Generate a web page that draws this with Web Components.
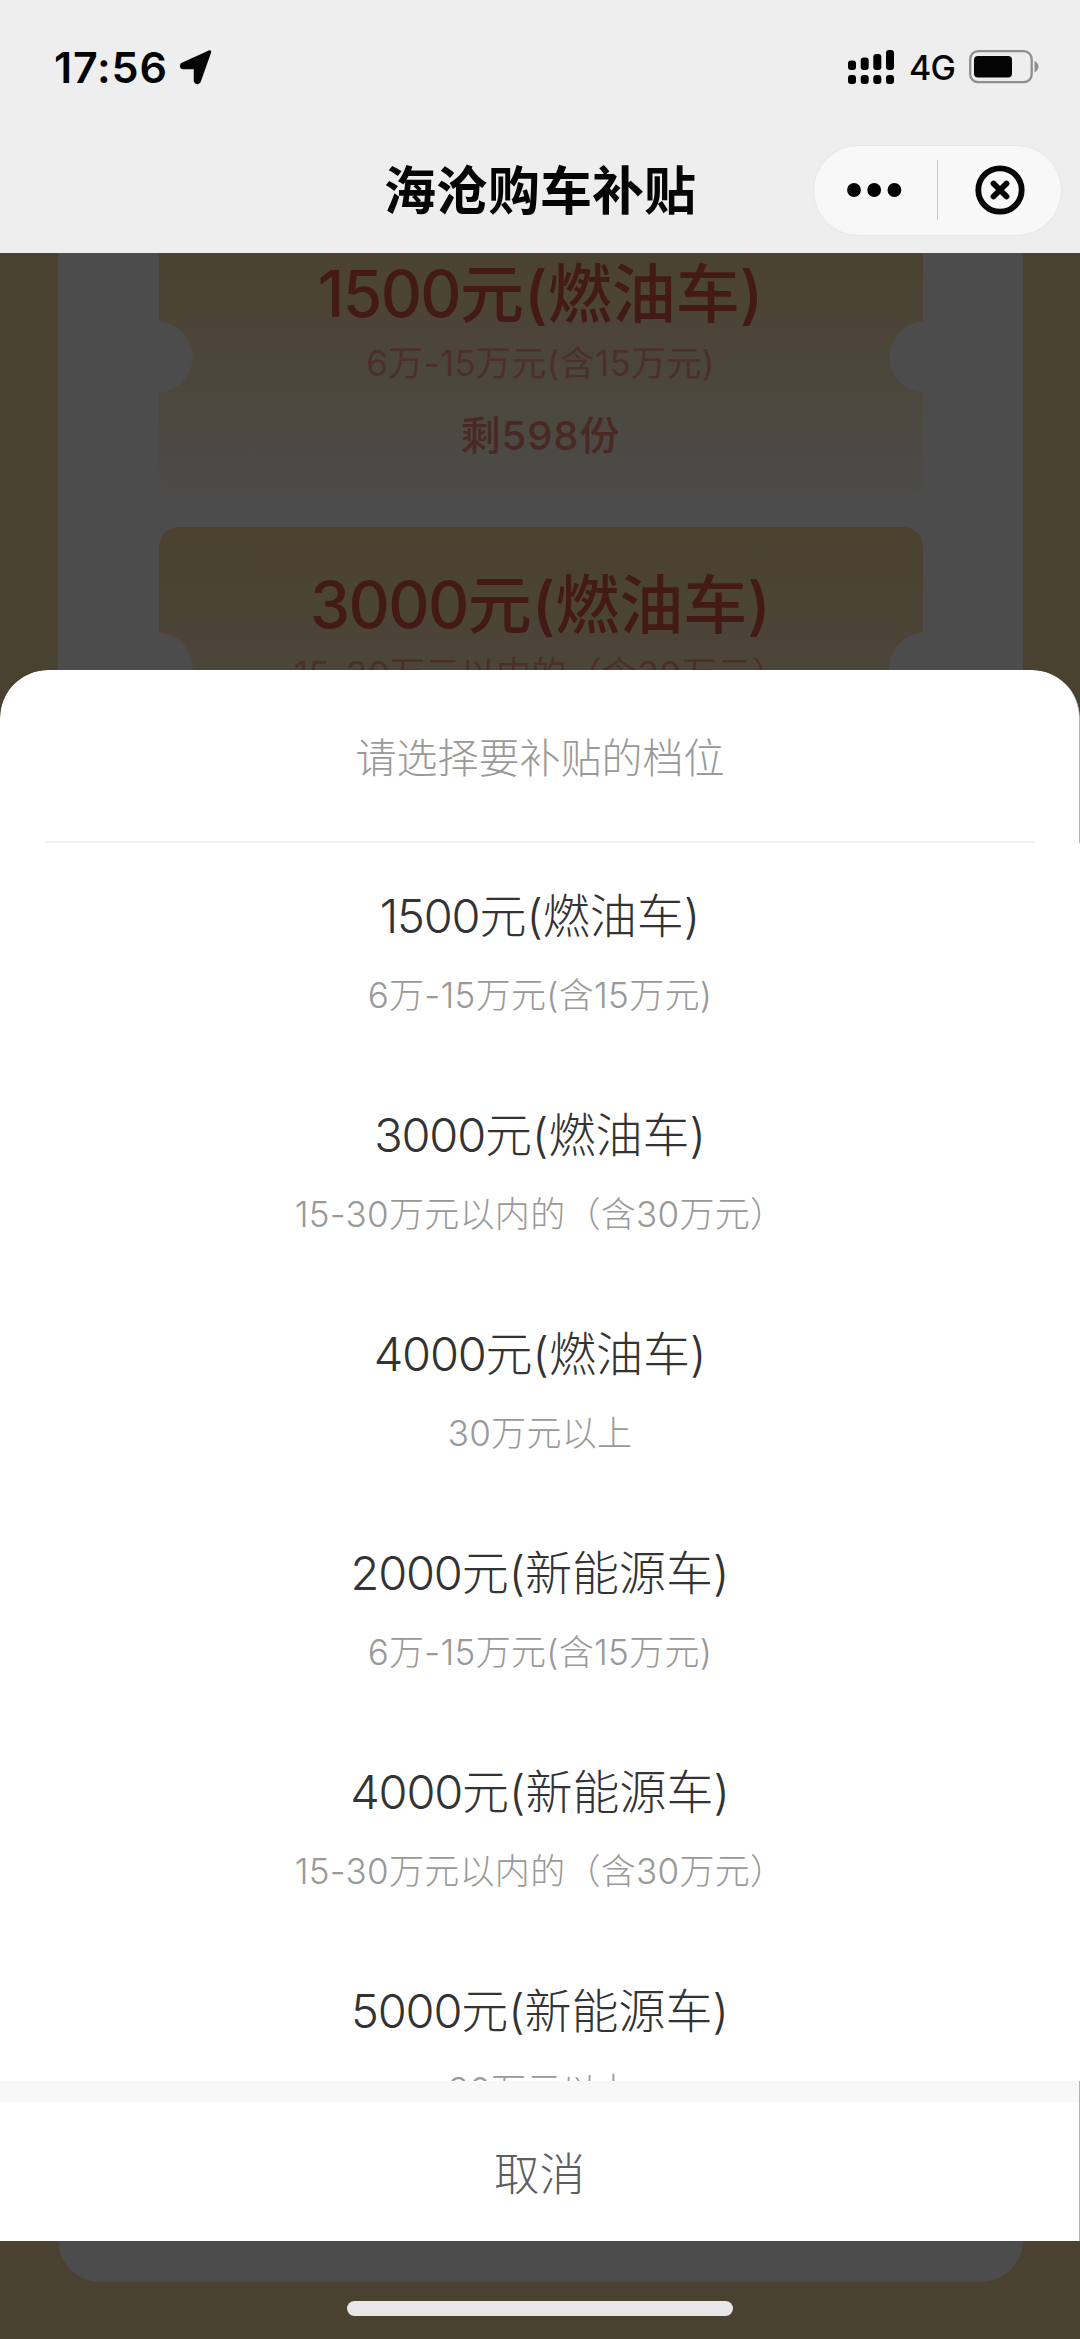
<!DOCTYPE html>
<html lang="zh-CN">
<head>
<meta charset="utf-8">
<title>海沧购车补贴</title>
<style>
body {
  margin: 0;
  width: 1080px;
  height: 2339px;
  overflow: hidden;
  font-family: Inter, "Noto Sans CJK SC", sans-serif;
}
</style>
</head>
<body>
<subsidy-app></subsidy-app>
<script>
var tiers = [
  {name: '1500元(燃油车)', range: '6万-15万元(含15万元)', left: '剩598份'},
  {name: '3000元(燃油车)', range: '15-30万元以内的（含30万元）', left: ''},
  {name: '4000元(燃油车)', range: '30万元以上'},
  {name: '2000元(新能源车)', range: '6万-15万元(含15万元)'},
  {name: '4000元(新能源车)', range: '15-30万元以内的（含30万元）'},
  {name: '5000元(新能源车)', range: '30万元以上'}
]

class StatusBar extends HTMLElement {
  constructor() {
    super()
    this.attachShadow({mode: 'open'}).innerHTML = `<style>
:host {
  display: flex;
  align-items: center;
  height: 134px;
  box-sizing: border-box;
  padding: 0 41px 0 54px;
  color: #050505;
}
#time {
  margin-top: -1px;
  font-size: 43px;
  font-weight: 600;
  line-height: 50px;
  letter-spacing: 0.8px;
}
#arrow {
  margin-left: 11px;
}
#signal {
  margin-left: auto;
}
#net {
  width: 48px;
  margin: 2px 12px 0 15px;
  font-size: 34px;
  line-height: 40px;
  font-weight: 500;
  letter-spacing: -0.8px;
}
svg {
  display: block;
}
</style>
<span id="time">17:56</span>
<svg id="arrow" width="34" height="36" viewBox="0 0 34 36"><path d="M30.5 3 L3 15.5 Q2 18.5 4 18.5 L16.5 18.5 L16.5 32 Q18 34.5 20 32.5 Z" fill="#050505" stroke="#050505" stroke-width="3.5" stroke-linejoin="round"/></svg>
<svg id="signal" width="46" height="34" viewBox="0 0 46 34">
<rect x="0" y="10.5" width="8" height="9.5" rx="3"/><rect x="12.7" y="7.5" width="8" height="12.5" rx="3"/><rect x="25.3" y="4" width="8" height="16" rx="3"/><rect x="38" y="0" width="8" height="20" rx="3"/>
<rect x="0" y="25" width="8" height="9" rx="3"/><rect x="12.7" y="25" width="8" height="9" rx="3"/><rect x="25.3" y="25" width="8" height="9" rx="3"/><rect x="38" y="25" width="8" height="9" rx="3"/>
</svg>
<span id="net">4G</span>
<svg width="70" height="34" viewBox="0 0 70 34"><rect x="1.2" y="1.2" width="61.5" height="31" rx="8" fill="none" stroke="#8f8f8f" stroke-width="2.3"/><rect x="5" y="6" width="38" height="21.5" rx="4" fill="#050505"/><path d="M65.5 11 Q69.5 13 69.5 16.5 T65.5 22.5Z" fill="#8f8f8f"/></svg>`
  }
}
customElements.define('status-bar', StatusBar)

class CapsuleMenu extends HTMLElement {
  constructor() {
    super()
    this.attachShadow({mode: 'open'}).innerHTML = `<style>
:host {
  display: flex;
  align-items: center;
  width: 249px;
  height: 91px;
  box-sizing: border-box;
  border: 1px solid #e7e7e7;
  border-radius: 46px;
  background: #f8f8f8;
}
svg {
  display: block;
}
#line {
  width: 1px;
  height: 60px;
  background: #c8c8c8;
}
</style>
<svg width="123" height="60" viewBox="0 0 123 60"><circle cx="40" cy="30" r="6.9"/><circle cx="60.2" cy="30" r="6.9"/><circle cx="80.4" cy="30" r="6.9"/></svg>
<span id="line"></span>
<svg width="122" height="60" viewBox="0 0 122 60" fill="none" stroke="#050505" stroke-width="5.8" stroke-linecap="round"><circle cx="62" cy="30" r="21.7"/><path d="M55.5 23.5 L68.5 36.5 M68.5 23.5 L55.5 36.5"/></svg>`
  }
}
customElements.define('capsule-menu', CapsuleMenu)

class NavBar extends HTMLElement {
  constructor() {
    super()
    this.attachShadow({mode: 'open'}).innerHTML = `<style>
:host {
  display: grid;
  grid-template-columns: 1fr auto 1fr;
  align-items: center;
  height: 112px;
  box-sizing: border-box;
  padding: 0 18px;
}
h1 {
  grid-column: 2;
  margin: 0;
  padding-top: 4px;
  font-size: 52px;
  line-height: 76px;
  font-weight: 600;
  color: #050505;
}
capsule-menu {
  justify-self: end;
}
</style>
<h1><slot></slot></h1>
<capsule-menu></capsule-menu>`
  }
}
customElements.define('nav-bar', NavBar)

class CouponTicket extends HTMLElement {
  constructor() {
    super()
    this.attachShadow({mode: 'open'}).innerHTML = `<style>
:host {
  display: block;
  height: 281px;
  box-sizing: border-box;
  padding-top: 33px;
  border-radius: 20px;
  /* the two side notches are painted in the card colour */
  background:
    radial-gradient(circle at -2px 141px, #4c4c4c 35px, transparent 36px),
    radial-gradient(circle at 766px 141px, #4c4c4c 35px, transparent 36px),
    linear-gradient(#4a412e, #4c4538 45%, #4b483f 70%, #4c4b49);
  text-align: center;
  white-space: nowrap;
  --digit-gap: -1.6px;
}
p {
  margin: 0;
}
#name {
  font-size: 64px;
  line-height: 90px;
  font-weight: 500;
  color: #431a15;
}
#range {
  margin-top: 1px;
  font-size: 35px;
  line-height: 46px;
  letter-spacing: 0.3px;
  color: #4b3029;
}
#left {
  margin-top: 25px;
  font-size: 40px;
  line-height: 50px;
  letter-spacing: 0.9px;
  font-weight: 450;
  color: #4a2824;
}
</style>
<p id="name"><slot name="name"></slot></p>
<p id="range"><slot name="range"></slot></p>
<p id="left"><slot name="left"></slot></p>`
  }
}
customElements.define('coupon-ticket', CouponTicket)

class CouponPage extends HTMLElement {
  constructor() {
    super()
    this.attachShadow({mode: 'open'}).innerHTML = `<style>
:host {
  display: flex;
  flex-direction: column;
  align-items: center;
  background: #4a4230;
  overflow: hidden;
}
#card {
  display: flex;
  flex-direction: column;
  flex: none;
  gap: 30px;
  width: 965px;
  height: 2066px;
  margin-top: -37px;
  padding: 0 100px 0 101px;
  box-sizing: border-box;
  border-radius: 0 0 42px 42px;
  background: #4c4c4c;
}
#home {
  flex: none;
  width: 386px;
  height: 15px;
  margin-top: 19px;
  border-radius: 8px;
  background: #e8e6e6;
}
</style>
<div id="card"><slot></slot></div>
<div id="home"></div>`
  }
}
customElements.define('coupon-page', CouponPage)

class SheetOption extends HTMLElement {
  constructor() {
    super()
    this.attachShadow({mode: 'open'}).innerHTML = `<style>
:host {
  display: block;
  flex: none;
  height: 219px;
  box-sizing: border-box;
  padding-top: 38px;
  text-align: center;
  white-space: nowrap;
  font-weight: 300;
  --digit-gap: -1.2px;
}
#name {
  font-size: 47px;
  line-height: 70px;
  color: #333;
}
#range {
  margin-top: 19px;
  font-size: 35px;
  line-height: 50px;
  letter-spacing: 0.3px;
  color: #999;
}
</style>
<div id="name"><slot name="name"></slot></div>
<div id="range"><slot name="range"></slot></div>`
  }
}
customElements.define('sheet-option', SheetOption)

class ActionSheet extends HTMLElement {
  constructor() {
    super()
    this.attachShadow({mode: 'open'}).innerHTML = `<style>
:host {
  display: flex;
  flex-direction: column;
  height: 1571px;
  border-radius: 48px 48px 0 0;
  overflow: hidden;
  font-weight: 300;
  text-align: center;
}
#head {
  height: 173px;
  padding: 0 44px 0 45px;
  box-sizing: border-box;
  border-right: 1px solid #b4b2ad;
  border-radius: 48px 48px 0 0;
  background: #fff;
}
#head > div {
  height: 173px;
  box-sizing: border-box;
  border-bottom: 2px solid #f1f1f1;
  font-size: 41px;
  line-height: 176px;
  color: #999;
}
#list {
  display: flex;
  flex-direction: column;
  height: 1238px;
  overflow: hidden;
  background: #fff;
}
#foot {
  border-right: 1px solid #b4b2ad;
  background: #fff;
}
#cancel {
  height: 160px;
  box-sizing: border-box;
  border-top: 21px solid #f8f8f8;
  font-size: 45.5px;
  line-height: 146px;
  color: #5e5e5e;
}
</style>
<div id="head"><div><slot name="title"></slot></div></div>
<div id="list"><slot></slot></div>
<div id="foot"><div id="cancel"><slot name="cancel"></slot></div></div>`
  }
}
customElements.define('action-sheet', ActionSheet)

class SubsidyApp extends HTMLElement {
  constructor() {
    super()
    // amounts are set a little tighter than the rest of the name
    var fields = function(t, keys) {
      return keys.map(k => {
        var text = k == 'name' ? t[k].replace(/^\d+/, '<span class="amount">$&</span>') : t[k]
        return `<span slot="${k}">${text}</span>`
      }).join('')
    }
    this.attachShadow({mode: 'open'}).innerHTML = `<style>
:host {
  display: grid;
  grid-template-rows: 253px 2086px;
  grid-template-columns: 1080px;
}
header {
  box-sizing: border-box;
  background: #eee;
}
/* page and sheet share one cell, the sheet on top */
coupon-page, action-sheet {
  grid-row: 2;
  grid-column: 1;
}
action-sheet {
  align-self: end;
  margin-bottom: 98px;
}
.amount {
  letter-spacing: var(--digit-gap);
}
</style>
<header>
<status-bar></status-bar>
<nav-bar>海沧购车补贴</nav-bar>
</header>
<coupon-page>${tiers.slice(0, 2).map(t => `<coupon-ticket>${fields(t, ['name', 'range', 'left'])}</coupon-ticket>`).join('')}</coupon-page>
<action-sheet>
<span slot="title">请选择要补贴的档位</span>
${tiers.map(t => `<sheet-option>${fields(t, ['name', 'range'])}</sheet-option>`).join('')}
<span slot="cancel">取消</span>
</action-sheet>`
  }
}
customElements.define('subsidy-app', SubsidyApp)
</script>
</body>
</html>
